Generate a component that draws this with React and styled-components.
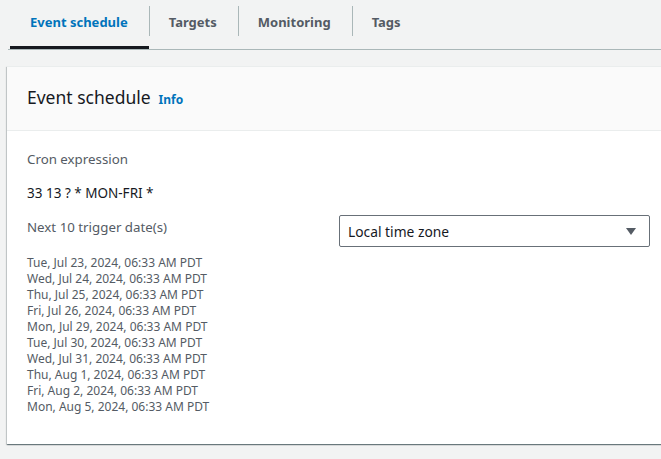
import React, { useState } from "react";
import styled, { createGlobalStyle } from "styled-components";

const GlobalStyle = createGlobalStyle`
  html, body {
    margin: 0;
    padding: 0;
    background: #f2f3f3;
    font-family: "Noto Sans", "Open Sans", sans-serif;
    overflow: hidden;
  }
`;

const Page = styled.div`
  width: 661px;
  height: 459px;
  padding-left: 8px;
  box-sizing: border-box;
`;

const TabBar = styled.div`
  display: flex;
  align-items: stretch;
  height: 50px;
  border-bottom: 1px solid #aab7b8;
  box-sizing: border-box;
`;

const Tab = styled.div`
  position: relative;
  display: flex;
  align-items: center;
  padding: 0 21px 6px 20px;
  font-size: 13px;
  font-weight: 700;
  color: ${(p) => (p.$active ? "#0073bb" : "#545b64")};
  cursor: pointer;
  box-sizing: border-box;
  margin-left: ${(p) => (p.$first ? "2px" : "0")};

  &::before {
    content: "";
    display: ${(p) => (p.$first ? "none" : "block")};
    position: absolute;
    left: 0;
    top: 6px;
    height: 30px;
    width: 1px;
    background: #aab7b8;
  }

  &::after {
    content: "";
    display: ${(p) => (p.$active ? "block" : "none")};
    position: absolute;
    left: 0;
    right: 0;
    bottom: 0;
    height: 3px;
    background: #16191f;
  }
`;

const Card = styled.section`
  margin-top: 16px;
  margin-left: -1px;
  width: 680px;
  height: 378px;
  background: #ffffff;
  box-shadow: 0 1px 1px 0 rgba(0, 28, 36, 0.4), 1px 1px 1px 0 rgba(0, 28, 36, 0.15),
    -1px 1px 1px 0 rgba(0, 28, 36, 0.15);
  border-top: 1px solid #eaeded;
  box-sizing: border-box;
`;

const CardHeader = styled.header`
  display: flex;
  align-items: baseline;
  gap: 8px;
  height: 64px;
  padding: 16px 20px 0 20px;
  background: #fafafa;
  border-bottom: 1px solid #eaeded;
  box-sizing: border-box;
`;

const Title = styled.h2`
  margin: 0;
  font-size: 17.5px;
  font-weight: 400;
  color: #16191f;
  line-height: 28px;
`;

const InfoLink = styled.a`
  font-size: 12px;
  font-weight: 700;
  color: #0073bb;
  text-decoration: none;
  cursor: pointer;
`;

const CardBody = styled.div`
  display: grid;
  grid-template-columns: 292px 311px;
  column-gap: 20px;
  padding: 18px 20px 0 20px;
`;

const Column = styled.div`
  display: flex;
  flex-direction: column;
`;

const FullRow = styled.div`
  grid-column: 1 / span 2;
  display: flex;
  flex-direction: column;
`;

const Label = styled.div`
  font-size: 13.3px;
  color: #545b64;
  line-height: 20px;
`;

const Value = styled.div`
  font-size: 13.5px;
  color: #16191f;
  line-height: 20px;
  margin-top: 14px;
  margin-bottom: 14px;
`;

const DateList = styled.ul`
  list-style: none;
  margin: 18px 0 0 0;
  padding: 0;
`;

const DateItem = styled.li`
  font-size: 12px;
  line-height: 16px;
  color: #545b64;
`;

const SelectBox = styled.div`
  display: flex;
  align-items: center;
  justify-content: space-between;
  height: 32px;
  margin-top: -2px;
  padding: 0 12px 0 8px;
  border: 1px solid #687078;
  border-radius: 2px;
  background: #ffffff;
  box-sizing: border-box;
  font-size: 13.8px;
  color: #16191f;
  cursor: pointer;
`;

const Caret = styled.svg`
  width: 12px;
  height: 12px;
  fill: #545b64;
`;

const tabs = ["Event schedule", "Targets", "Monitoring", "Tags"];

const dates = [
  "Tue, Jul 23, 2024, 06:33 AM PDT",
  "Wed, Jul 24, 2024, 06:33 AM PDT",
  "Thu, Jul 25, 2024, 06:33 AM PDT",
  "Fri, Jul 26, 2024, 06:33 AM PDT",
  "Mon, Jul 29, 2024, 06:33 AM PDT",
  "Tue, Jul 30, 2024, 06:33 AM PDT",
  "Wed, Jul 31, 2024, 06:33 AM PDT",
  "Thu, Aug 1, 2024, 06:33 AM PDT",
  "Fri, Aug 2, 2024, 06:33 AM PDT",
  "Mon, Aug 5, 2024, 06:33 AM PDT",
];

const App = () => {
  const [active, setActive] = useState(0);

  return (
    <>
      <GlobalStyle />
      <Page>
        <TabBar>
          {tabs.map((t, i) => (
            <Tab key={t} $first={i === 0} $active={i === active} onClick={() => setActive(i)}>
              {t}
            </Tab>
          ))}
        </TabBar>
        <Card>
          <CardHeader>
            <Title>Event schedule</Title>
            <InfoLink>Info</InfoLink>
          </CardHeader>
          <CardBody>
            <FullRow>
              <Label>Cron expression</Label>
              <Value>33 13 ? * MON-FRI *</Value>
            </FullRow>
            <Column>
              <Label>Next 10 trigger date(s)</Label>
              <DateList>
                {dates.map((d) => (
                  <DateItem key={d}>{d}</DateItem>
                ))}
              </DateList>
            </Column>
            <Column>
              <SelectBox>
                <span>Local time zone</span>
                <Caret viewBox="0 0 12 12">
                  <path d="M1 3h10L6 10z" />
                </Caret>
              </SelectBox>
            </Column>
          </CardBody>
        </Card>
      </Page>
    </>
  );
};

export default App;
